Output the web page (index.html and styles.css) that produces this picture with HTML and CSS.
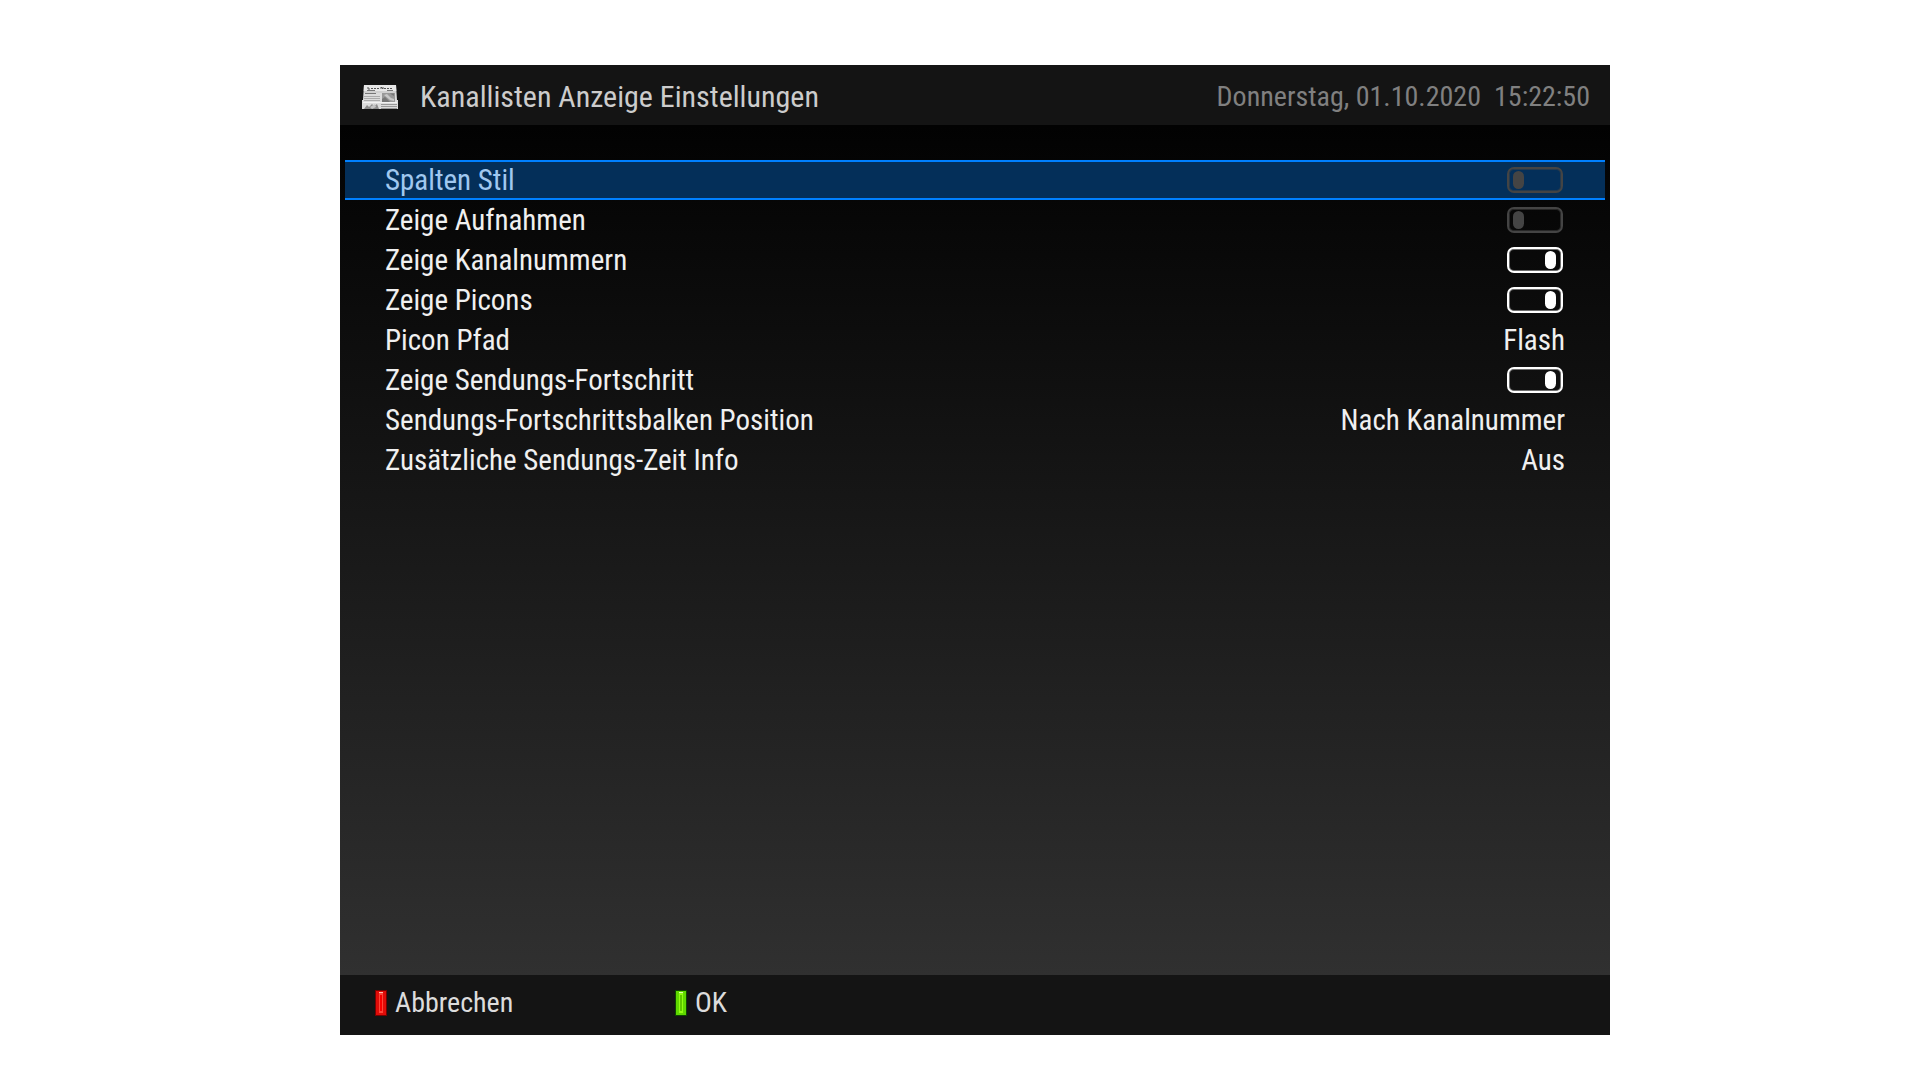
FILE: index.html
```html
<!DOCTYPE html>
<html lang="de">
<head>
    <meta charset="UTF-8">
    <meta name="viewport" content="width=device-width, initial-scale=1.0">
    <title>Kanallisten Anzeige Einstellungen</title>
    <link rel="stylesheet" href="styles.css">
</head>
<body>
    <div class="screen">
        <header class="header">
            <svg class="header-icon" viewBox="0 0 36 24" aria-hidden="true">
                <path d="M2 0H34L35 15H36V24H0V15H1Z" fill="#dcdcdc"/>
                <path d="M2 0H34L34.3 6H1.7Z" fill="#e8e8e8"/>
                <path d="M6 2V4H8M9 3.500H11M12 3.500H14M15 3.500H17M19 4V2L21 4V2M22 3.500H24M25 3L26 4L27 3M28 3.500H30" fill="none" stroke="#555" stroke-width="1"/>
                <path d="M5 5.5H13M25 5.5H31" stroke="#777" stroke-width="1"/>
                <path d="M2 7H34" stroke="#c4c4c4" stroke-width="1"/>
                <path d="M3 8.5H14" stroke="#777" stroke-width="1"/>
                <path d="M2 11.5H18M2 13.5H18M2 15.5H18" stroke="#aaa" stroke-width="1"/>
                <path d="M20 8H33V18H20Z" fill="#999"/>
                <path d="M20 18V14L23 12L26 15L29 18Z" fill="#777"/>
                <path d="M22 10L25 9L29 13L32 14V16L28 15Z" fill="#c8c8c8"/>
                <path d="M28 8.5H32V11Z" fill="#777"/>
                <path d="M1 17.5H35" stroke="#f2f2f2" stroke-width="1"/>
                <path d="M2 24L5 20L7 22L10 19L12 21L15 19L17 24Z" fill="#8c8c8c"/>
                <path d="M8 22L13 19L14 22L10 24Z" fill="#c4c4c4"/>
                <path d="M19 19.5H35M19 21.5H35M19 23.5H35" stroke="#999" stroke-width="1"/>
            </svg>
            <h1 class="title">Kanallisten Anzeige Einstellungen</h1>
            <div class="clock">
                <time datetime="2020-10-01">Donnerstag, 01.10.2020</time>
                <time datetime="15:22:50">15:22:50</time>
            </div>
        </header>

        <main class="settings">
            <div class="row selected">
                <label for="columnStyle">Spalten Stil</label>
                <input class="toggle" type="checkbox" id="columnStyle">
            </div>
            <div class="row">
                <label for="recordings">Zeige Aufnahmen</label>
                <input class="toggle" type="checkbox" id="recordings">
            </div>
            <div class="row">
                <label for="channelNumbers">Zeige Kanalnummern</label>
                <input class="toggle" type="checkbox" id="channelNumbers" checked>
            </div>
            <div class="row">
                <label for="picons">Zeige Picons</label>
                <input class="toggle" type="checkbox" id="picons" checked>
            </div>
            <div class="row">
                <label for="piconPath">Picon Pfad</label>
                <select class="choice" id="piconPath">
                    <option>Flash</option>
                </select>
            </div>
            <div class="row">
                <label for="progress">Zeige Sendungs-Fortschritt</label>
                <input class="toggle" type="checkbox" id="progress" checked>
            </div>
            <div class="row">
                <label for="progressPosition">Sendungs-Fortschrittsbalken Position</label>
                <select class="choice" id="progressPosition">
                    <option>Nach Kanalnummer</option>
                </select>
            </div>
            <div class="row">
                <label for="timeInfo">Zusätzliche Sendungs-Zeit Info</label>
                <select class="choice" id="timeInfo">
                    <option>Aus</option>
                </select>
            </div>
        </main>

        <footer class="footer">
            <button class="key key-red" type="button">Abbrechen</button>
            <button class="key key-green" type="button">OK</button>
        </footer>
    </div>
</body>
</html>
```

FILE: styles.css
```css
:root {
    --bar-color: #141414;
    --text-color: #f0f0f0;
    --accent-color: #0080ff;
}

* {
    box-sizing: border-box;
}

body {
    display: flex;
    min-height: 100vh;
    margin: 0;
    padding: 65px 310px 45px 340px;
    background: #fff;
    color: var(--text-color);
    font-family: "Roboto Condensed", Roboto, sans-serif;
    font-size: 29px;
    line-height: 36px;
}

.screen {
    flex: 1;
    display: flex;
    flex-direction: column;
}

/* Header */
.header {
    display: flex;
    align-items: center;
    height: 60px;
    padding: 4px 20px 0 22px;
    background: var(--bar-color);
}

.header-icon {
    width: 36px;
    height: 24px;
    margin-right: 22px;
}

.title {
    flex: 1;
    margin: 0;
    color: #ccc;
    font-size: 30px;
    font-weight: normal;
}

.clock {
    display: flex;
    gap: 13px;
    color: #808080;
    font-size: 28px;
}

/* Settings list */
.settings {
    flex: 1;
    padding: 35px 5px;
    background: linear-gradient(#020202, #303030);
}

.row {
    display: flex;
    align-items: center;
    justify-content: space-between;
    height: 40px;
    padding: 0 40px;
}

.row.selected {
    background: #042f59;
    border-top: 2px solid var(--accent-color);
    border-bottom: 2px solid var(--accent-color);
    color: #a0c8f0;
}

.toggle {
    appearance: none;
    display: flex;
    align-items: center;
    width: 56px;
    height: 26px;
    margin: 0 2px;
    padding: 0 5px 0 4px;
    border: 2px solid #444;
    border-radius: 7px;
    box-shadow: inset 0 0 0 1px #4448;
}

.toggle::before {
    content: "";
    width: 11px;
    height: 18px;
    border-radius: 6px;
    background: #444;
}

.toggle:checked {
    justify-content: flex-end;
    border-color: #fff;
    box-shadow: inset 0 0 0 1px #fff6;
}

.toggle:checked::before {
    background: #fff;
}

.choice {
    appearance: none;
    padding: 0;
    border: 0;
    background: none;
    color: inherit;
    font: inherit;
    text-align-last: right;
}

/* Colour keys */
.footer {
    display: grid;
    grid-template-columns: repeat(4, 300px);
    align-items: center;
    height: 60px;
    padding: 0 35px 4px;
    background: var(--bar-color);
}

.key {
    display: flex;
    align-items: center;
    gap: 8px;
    padding: 0;
    border: 0;
    background: none;
    color: #dcdcdc;
    font: inherit;
    font-size: 28px;
}

/* Lamp: dark frame, bright body, highlight on top and a deeper core */
.key::before {
    content: "";
    width: 10px;
    height: 24px;
    border: 1px solid var(--lamp-frame);
    background:
        linear-gradient(var(--lamp-shine), var(--lamp-shine)) center 1px / 4px 1px no-repeat,
        linear-gradient(var(--lamp-core), var(--lamp-core)) center / 2px 16px no-repeat,
        linear-gradient(var(--lamp-light), var(--lamp-light)) center / 4px 20px no-repeat,
        var(--lamp-color);
}

.key-red {
    --lamp-frame: #780000;
    --lamp-color: #e00c08;
    --lamp-light: #ff4438;
    --lamp-core: #f80000;
    --lamp-shine: #ffc0b0;
}

.key-green {
    --lamp-frame: #0c4800;
    --lamp-color: #60d800;
    --lamp-light: #90ff10;
    --lamp-core: #60c800;
    --lamp-shine: #e0ffb0;
}
```
